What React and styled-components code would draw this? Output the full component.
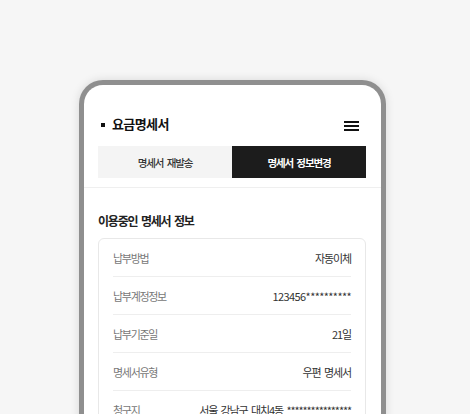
import React from "react";
import styled, { createGlobalStyle } from "styled-components";

const Global = createGlobalStyle`
  html, body { margin: 0; padding: 0; background: #f6f6f6; overflow: hidden; }
  body { font-family: "Noto Sans CJK KR", "Noto Sans", sans-serif; }
  * { box-sizing: border-box; }
`;

const Stage = styled.div`
  padding: 80px 0 0 79px;
  height: 414px;
`;

const Phone = styled.div`
  width: 307px;
  height: 420px;
  border: 5px solid #8f8f8f;
  border-bottom: none;
  border-radius: 24px 24px 0 0;
  background: #fff;
  box-shadow: 0 0 10px rgba(0, 0, 0, 0.12);
  display: flex;
  flex-direction: column;
`;

const Header = styled.div`
  display: flex;
  justify-content: space-between;
  align-items: flex-start;
  padding: 28px 22px 0 17px;
  height: 61px;
`;

const Title = styled.h1`
  margin: 0;
  display: flex;
  align-items: center;
  gap: 7px;
  font-size: 13px;
  font-weight: 700;
  letter-spacing: -0.6px;
  color: #111;
  line-height: 22px;
`;

const Bullet = styled.span`
  width: 4px;
  height: 4px;
  background: #111;
  margin-top: 1px;
`;

const Menu = styled.button`
  border: none;
  background: none;
  padding: 0;
  margin-top: 8px;
  width: 15px;
  display: flex;
  flex-direction: column;
  gap: 2px;
  span {
    display: block;
    height: 2px;
    background: #111;
  }
`;

const Tabs = styled.div`
  display: grid;
  grid-template-columns: 1fr 1fr;
  padding: 0 15px 9px 14px;
  border-bottom: 1px solid #efefef;
`;

const Tab = styled.div`
  height: 32px;
  display: flex;
  align-items: center;
  justify-content: center;
  font-size: 10.5px;
  font-weight: ${(p) => (p.$active ? 700 : 500)};
  letter-spacing: -1.1px;
  word-spacing: 2px;
  background: ${(p) => (p.$active ? "#1c1c1c" : "#f4f4f4")};
  color: ${(p) => (p.$active ? "#fff" : "#333")};
`;

const Content = styled.div`
  padding: 24px 15px 0 14px;
`;

const SectionTitle = styled.h2`
  margin: 0 0 8px;
  font-size: 12px;
  line-height: 18px;
  font-weight: 700;
  letter-spacing: -1.2px;
  word-spacing: 2px;
  color: #222;
`;

const Card = styled.div`
  border: 1px solid #e8e8e8;
  border-radius: 6px;
  padding: 0 14px;
`;

const Row = styled.div`
  display: flex;
  justify-content: space-between;
  align-items: center;
  height: 38px;
  border-bottom: 1px solid #eeeeee;
  font-size: 11px;
  &:last-child { border-bottom: none; }
`;

const Label = styled.span`
  color: #777;
  letter-spacing: -1.3px;
`;

const Value = styled.span`
  color: #333;
  letter-spacing: ${(p) => (p.$num ? "-0.6px" : "-1.1px")};
  word-spacing: 2px;
`;

const rows = [
  ["납부방법", "자동이체"],
  ["납부계정정보", "123456**********", true],
  ["납부기준일", "21일"],
  ["명세서유형", "우편 명세서"],
  ["청구지", "서울 강남구 대치4동 ****************"],
];

export default function App() {
  return (
    <>
      <Global />
      <Stage>
        <Phone>
          <Header>
            <Title>
              <Bullet />
              요금명세서
            </Title>
            <Menu aria-label="메뉴">
              <span />
              <span />
              <span />
            </Menu>
          </Header>
          <Tabs>
            <Tab>명세서 재발송</Tab>
            <Tab $active>명세서 정보변경</Tab>
          </Tabs>
          <Content>
            <SectionTitle>이용중인 명세서 정보</SectionTitle>
            <Card>
              {rows.map(([l, v, num]) => (
                <Row key={l}>
                  <Label>{l}</Label>
                  <Value $num={num}>{v}</Value>
                </Row>
              ))}
            </Card>
          </Content>
        </Phone>
      </Stage>
    </>
  );
}
